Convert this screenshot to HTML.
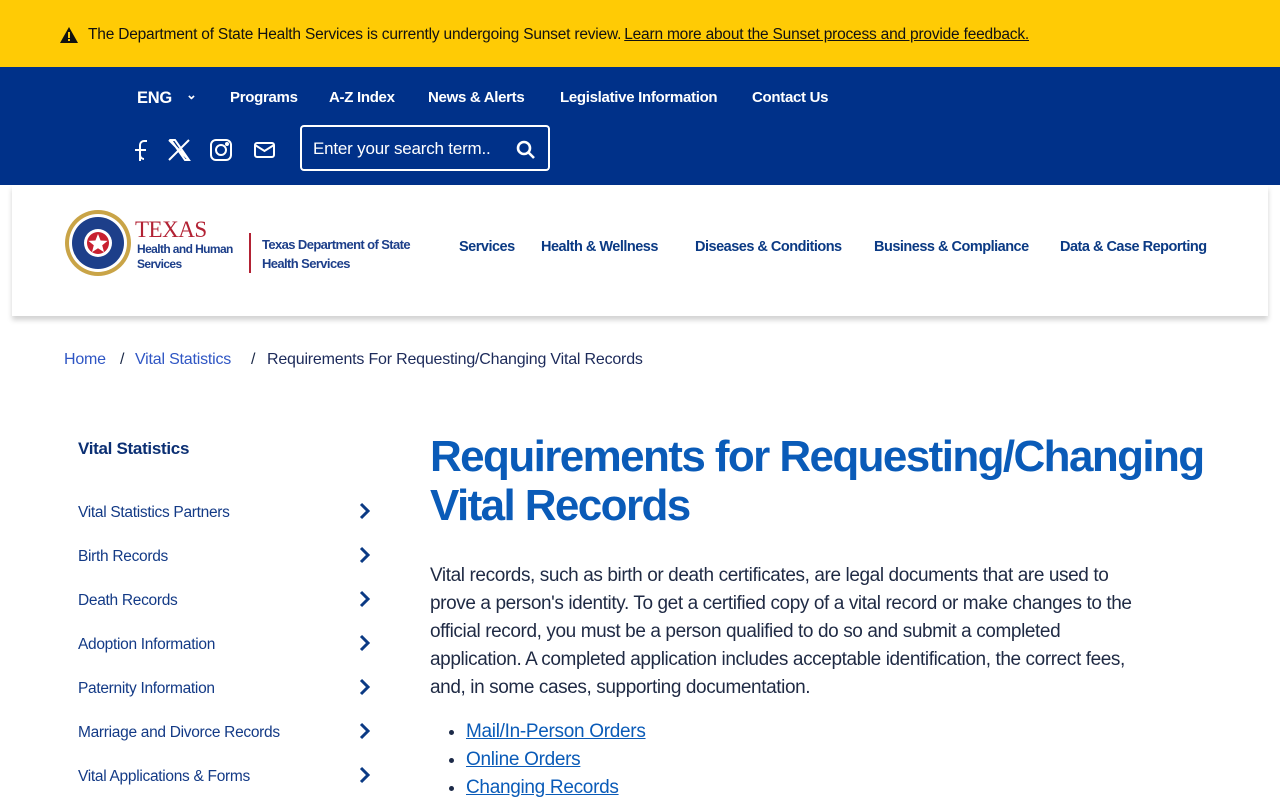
<!DOCTYPE html>
<html><head><meta charset="utf-8"><style>
*{margin:0;padding:0;box-sizing:border-box}
body{width:1280px;height:800px;overflow:hidden;font-family:"Liberation Sans",sans-serif;background:#fff;color:#1c2a48}
.alert{height:67px;background:#ffcb05;display:flex;align-items:center;padding-left:60px;font-size:15.5px;color:#111;letter-spacing:-.2px;padding-top:3px}
.alert a{color:#111;margin-left:3px}
.top{height:118px;background:#003189;position:relative;color:#fff}
.search{position:absolute;left:300px;top:125px;width:250px;height:46px;border:2px solid #fff;border-radius:4px;font-size:17px;padding:12px 0 0 11px;letter-spacing:-.2px}
.hdr{height:131px;position:relative;box-shadow:0 4px 5px rgba(0,0,0,.18);margin:0 12px;}
.mnav span{position:absolute;top:54px;font-weight:bold;font-size:14.5px;color:#0b3a84;letter-spacing:-.5px;white-space:nowrap}
.crumb{position:absolute;top:351px;font-size:16px;letter-spacing:-.2px}
.side{position:absolute;left:78px;font-size:15.5px;color:#133a86;letter-spacing:-.3px}
h1{position:absolute;left:430px;top:432px;font-size:44px;line-height:49px;color:#0a5bb8;font-weight:bold;letter-spacing:-1.6px;white-space:nowrap}
.p{position:absolute;left:430px;top:562px;width:712px;font-size:19px;line-height:28px;color:#1f2a44;letter-spacing:-.4px}
ul{position:absolute;left:466px;top:718px;font-size:19px;line-height:28px;letter-spacing:-.3px}
ul a{color:#0a5bb8}
.n span{position:absolute;font-weight:bold;font-size:15px;white-space:nowrap;letter-spacing:-.3px}
</style></head><body>
<div class="alert"><svg width="18" height="16" viewBox="0 0 18 16" style="margin-right:10px"><path d="M9 0L18 16H0Z" fill="#111"/><rect x="8" y="5" width="2" height="6" fill="#ffcb05"/><rect x="8" y="12" width="2" height="2" fill="#ffcb05"/></svg>The Department of State Health Services is currently undergoing Sunset review. <a href="#">Learn more about the Sunset process and provide feedback.</a></div>
<div class="top">
<div class="n" style="position:absolute;top:22px;left:0">
<span style="left:137px;font-size:16.5px">ENG</span>
<span style="left:186px;top:-2px;font-size:13px">⌄</span>
<span style="left:230px">Programs</span>
<span style="left:329px">A-Z Index</span>
<span style="left:428px">News &amp; Alerts</span>
<span style="left:560px">Legislative Information</span>
<span style="left:752px">Contact Us</span>
</div>
<svg style="position:absolute;left:130px;top:70px" width="150" height="26" viewBox="0 0 150 26" fill="none" stroke="#fff" stroke-width="2">
<path d="M17 4h-3a4 4 0 0 0-4 4v16M5 13h11M10 18a4 4 0 0 0 4 4"/>
<path d="M39 3l20 20M59 3L39 23M41 3h4l14 20h-4z"/>
<rect x="81" y="3" width="20" height="20" rx="5"/><circle cx="91" cy="13" r="5"/><circle cx="97" cy="7" r="1" fill="#fff"/>
<rect x="125" y="6" width="19" height="14" rx="2"/><path d="M125 8l9.5 6 9.5-6"/>
</svg>
<div class="search" style="top:58px">Enter your search term..
<svg style="position:absolute;right:12px;top:13px" width="20" height="20" viewBox="0 0 20 20" fill="none" stroke="#fff" stroke-width="2.6"><circle cx="8" cy="8" r="6"/><path d="M12.5 12.5L18 18"/></svg></div>
</div>
<div class="hdr">
<svg style="position:absolute;left:52px;top:24px" width="68" height="68" viewBox="0 0 68 68"><circle cx="34" cy="34" r="33" fill="#c9a447"/><circle cx="34" cy="34" r="29" fill="#fff"/><circle cx="34" cy="34" r="26" fill="#1d3f8a"/><circle cx="34" cy="34" r="14" fill="#fff"/><circle cx="34" cy="34" r="11" fill="#c8202f"/><path d="M34 25l2.6 6.5 7 .4-5.4 4.4 1.8 6.8L34 39.3l-6 3.8 1.8-6.8-5.4-4.4 7-.4z" fill="#fff"/></svg>
<div style="position:absolute;left:123px;top:32px;font-family:'Liberation Serif',serif;font-size:23px;color:#b22234;letter-spacing:-.5px">TEXAS</div>
<div style="position:absolute;left:125px;top:57px;font-size:12px;line-height:15px;color:#1d3f8a;font-weight:bold;letter-spacing:-.6px">Health and Human<br>Services</div>
<div style="position:absolute;left:237px;top:48px;width:2px;height:40px;background:#b22234"></div>
<div style="position:absolute;left:250px;top:50px;font-size:13px;line-height:19px;color:#1d3f8a;font-weight:bold;letter-spacing:-.6px">Texas Department of State<br>Health Services</div>
<div class="mnav"><span style="left:447px">Services</span><span style="left:529px">Health &amp; Wellness</span><span style="left:683px">Diseases &amp; Conditions</span><span style="left:862px">Business &amp; Compliance</span><span style="left:1048px">Data &amp; Case Reporting</span></div>
</div>
<div class="crumb" style="left:64px;color:#2f56c4">Home</div>
<div class="crumb" style="left:120px">/</div>
<div class="crumb" style="left:135px;color:#2f56c4">Vital Statistics</div>
<div class="crumb" style="left:251px">/</div>
<div class="crumb" style="left:267px;color:#1c2a5a">Requirements For Requesting/Changing Vital Records</div>
<div class="side" style="top:439px;font-weight:bold;font-size:17px;color:#0b2f73">Vital Statistics</div>
<div class="side" style="top:504px">Vital Statistics Partners</div>
<div class="side" style="top:548px">Birth Records</div>
<div class="side" style="top:592px">Death Records</div>
<div class="side" style="top:636px">Adoption Information</div>
<div class="side" style="top:680px">Paternity Information</div>
<div class="side" style="top:724px">Marriage and Divorce Records</div>
<div class="side" style="top:768px">Vital Applications &amp; Forms</div>
<svg style="position:absolute;left:358px;top:502px" width="16" height="290" fill="none" stroke="#0b3a84" stroke-width="3"><path d="M3 2l7 7-7 7M3 46l7 7-7 7M3 90l7 7-7 7M3 134l7 7-7 7M3 178l7 7-7 7M3 222l7 7-7 7M3 266l7 7-7 7"/></svg>
<h1>Requirements for Requesting/Changing<br>Vital Records</h1>
<div class="p">Vital records, such as birth or death certificates, are legal documents that are used to prove a person's identity. To get a certified copy of a vital record or make changes to the official record, you must be a person qualified to do so and submit a completed application. A completed application includes acceptable identification, the correct fees, and, in some cases, supporting documentation.</div>
<ul><li><a href="#">Mail/In-Person Orders</a></li><li><a href="#">Online Orders</a></li><li><a href="#">Changing Records</a></li></ul>
</body></html>
